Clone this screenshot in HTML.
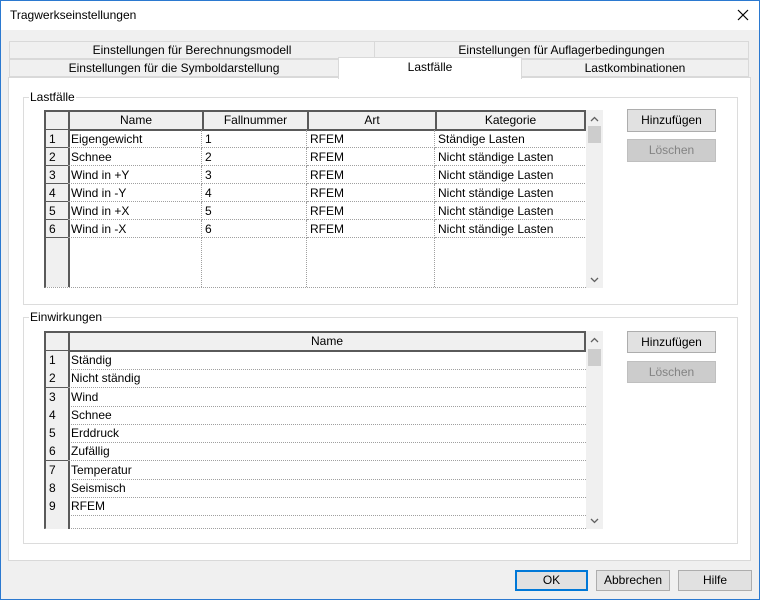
<!DOCTYPE html>
<html><head><meta charset="utf-8"><style>
*{box-sizing:border-box;margin:0;padding:0}
body{width:760px;height:600px;background:#f0f0f0;font-family:"Liberation Sans",sans-serif;font-size:12px;color:#000;position:relative;overflow:hidden}
.a{position:absolute}
.win{left:0;top:0;width:760px;height:600px;border:1px solid #2b79d0}
.title{left:1px;top:1px;width:758px;height:29px;background:#fff}
.tab{background:#f0f0f0;border:1px solid #d9d9d9;text-align:center;line-height:17px;height:18px}
.panel{left:8px;top:77px;width:743px;height:484px;background:#fff;border:1px solid #d9d9d9}
.grp{border:1px solid #dcdcdc}
.leg{background:#fff;padding:0 1px;line-height:14px}
.hd{background:#f0f0f0;border-top:2px solid #5a5a5a;border-bottom:2px solid #5a5a5a;border-right:2px solid #5a5a5a;text-align:center;line-height:17px;height:21px;top:0}
.rn{background:#f0f0f0;border-right:2px solid #5a5a5a;border-bottom:1px solid #5a5a5a;padding-left:3px}
.c{border-right:1px dotted #a0a0a0;border-bottom:1px dotted #a0a0a0;padding-left:3px;white-space:nowrap;overflow:hidden}
.btn{background:#e1e1e1;border:1px solid #adadad;text-align:center;line-height:20px}
.dis{background:#cccccc;border-color:#bfbfbf;color:#838383}
.sb{background:#f0f0f0}
.th{background:#cdcdcd}
</style></head><body>
<div class="a win"></div>
<div class="a title"></div>
<div class="a" style="left:10px;top:8px;font-size:12px">Tragwerkseinstellungen</div>
<svg class="a" style="left:737px;top:9px" width="12" height="12"><path d="M1 1L11 11M11 1L1 11" stroke="#000" stroke-width="1.2"/></svg>

<div class="a tab" style="left:9px;top:41px;width:366px">Einstellungen für Berechnungsmodell</div>
<div class="a tab" style="left:374px;top:41px;width:375px">Einstellungen für Auflagerbedingungen</div>
<div class="a tab" style="left:9px;top:59px;width:330px">Einstellungen für die Symboldarstellung</div>
<div class="a tab" style="left:521px;top:59px;width:228px">Lastkombinationen</div>
<div class="a panel"></div>
<div class="a" style="left:338px;top:57px;width:184px;height:22px;background:#fff;border:1px solid #d9d9d9;border-bottom:none;text-align:center;line-height:19px">Lastfälle</div>

<!-- group 1 -->
<div class="a grp" style="left:23px;top:97px;width:715px;height:208px"></div>
<div class="a leg" style="left:29px;top:90px">Lastfälle</div>
<div class="a" style="left:44px;top:110px;width:542px;height:178px;border-left:2px solid #5a5a5a;border-bottom:1px dotted #a0a0a0">
 <div class="a hd" style="left:0;width:24px"></div>
 <div class="a hd" style="left:24px;width:134px">Name</div>
 <div class="a hd" style="left:158px;width:105px">Fallnummer</div>
 <div class="a hd" style="left:263px;width:128px">Art</div>
 <div class="a hd" style="left:391px;width:149px">Kategorie</div>
</div>
<div class="a" id="t1" style="left:46px;top:130px"></div>
<div class="a sb" style="left:586px;top:110px;width:17px;height:178px"></div>
<div class="a th" style="left:588px;top:126px;width:13px;height:17px"></div>
<svg class="a" style="left:590px;top:116px" width="9" height="6"><path d="M1 5L4.5 1.5L8 5" stroke="#606060" fill="none" stroke-width="1.3"/></svg>
<svg class="a" style="left:590px;top:277px" width="9" height="6"><path d="M1 1L4.5 4.5L8 1" stroke="#606060" fill="none" stroke-width="1.3"/></svg>
<div class="a btn" style="left:627px;top:109px;width:89px;height:23px">Hinzufügen</div>
<div class="a btn dis" style="left:627px;top:139px;width:89px;height:23px">Löschen</div>

<!-- group 2 -->
<div class="a grp" style="left:23px;top:317px;width:715px;height:227px"></div>
<div class="a leg" style="left:29px;top:310px">Einwirkungen</div>
<div class="a" style="left:44px;top:331px;width:542px;height:198px;border-left:2px solid #5a5a5a;border-bottom:1px dotted #a0a0a0">
 <div class="a hd" style="left:0;width:24px"></div>
 <div class="a hd" style="left:24px;width:516px">Name</div>
</div>
<div class="a" id="t2" style="left:46px;top:351px"></div>
<div class="a sb" style="left:586px;top:331px;width:17px;height:198px"></div>
<div class="a th" style="left:588px;top:349px;width:13px;height:17px"></div>
<svg class="a" style="left:590px;top:337px" width="9" height="6"><path d="M1 5L4.5 1.5L8 5" stroke="#606060" fill="none" stroke-width="1.3"/></svg>
<svg class="a" style="left:590px;top:518px" width="9" height="6"><path d="M1 1L4.5 4.5L8 1" stroke="#606060" fill="none" stroke-width="1.3"/></svg>
<div class="a btn" style="left:627px;top:331px;width:89px;height:22px">Hinzufügen</div>
<div class="a btn dis" style="left:627px;top:361px;width:89px;height:22px">Löschen</div>

<div class="a btn" style="left:515px;top:570px;width:73px;height:21px;border:2px solid #0078d7;line-height:17px">OK</div>
<div class="a btn" style="left:596px;top:570px;width:74px;height:21px;line-height:19px">Abbrechen</div>
<div class="a btn" style="left:678px;top:570px;width:74px;height:21px;line-height:19px">Hilfe</div>

<script>
var r1=[["Eigengewicht","1","RFEM","Ständige Lasten"],["Schnee","2","RFEM","Nicht ständige Lasten"],["Wind in +Y","3","RFEM","Nicht ständige Lasten"],["Wind in -Y","4","RFEM","Nicht ständige Lasten"],["Wind in +X","5","RFEM","Nicht ständige Lasten"],["Wind in -X","6","RFEM","Nicht ständige Lasten"],["","","",""]];
var w=[134,105,128,150],h="";
r1.forEach(function(r,i){var t=i*18,hh=i==6?49:18;var x=0;
h+='<div class="a rn" style="left:0;top:'+t+'px;width:24px;height:'+hh+'px;line-height:19px;'+(i==6?'border-bottom:none':'')+'">'+(i<6?i+1:'')+'</div>';x=22;
r.forEach(function(v,j){h+='<div class="a c" style="left:'+x+'px;top:'+t+'px;width:'+w[j]+'px;height:'+hh+'px;line-height:19px;'+(j==3?'border-right:none;':'')+(i==6?'border-bottom:none':'')+'">'+v+'</div>';x+=w[j];});});
document.getElementById('t1').innerHTML=h;
var r2=["Ständig","Nicht ständig","Wind","Schnee","Erddruck","Zufällig","Temperatur","Seismisch","RFEM",""];h="";
r2.forEach(function(v,i){var t=Math.round(i*18.25),hh=i==9?13:18;
h+='<div class="a rn" style="left:0;top:'+t+'px;width:24px;height:'+(hh+1)+'px;line-height:19px;'+(i==9?'border-bottom:none':'')+'">'+(i<9?i+1:'')+'</div>';
h+='<div class="a c" style="left:22px;top:'+t+'px;width:518px;height:'+(hh+1)+'px;line-height:19px;border-right:none;'+(i==9?'border-bottom:none':'')+'">'+v+'</div>';});
document.getElementById('t2').innerHTML=h;
</script>
</body></html>
